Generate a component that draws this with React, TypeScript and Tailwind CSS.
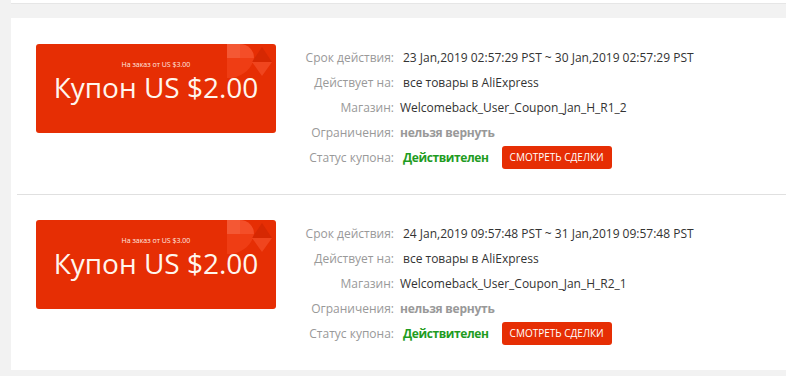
import React from "react";

type Coupon = {
  period: string;
  store: string;
};

const coupons: Coupon[] = [
  {
    period: "23 Jan,2019 02:57:29 PST ~ 30 Jan,2019 02:57:29 PST",
    store: "Welcomeback_User_Coupon_Jan_H_R1_2",
  },
  {
    period: "24 Jan,2019 09:57:48 PST ~ 31 Jan,2019 09:57:48 PST",
    store: "Welcomeback_User_Coupon_Jan_H_R2_1",
  },
];

function CouponCard() {
  return (
    <div className="relative w-[240px] h-[89px] shrink-0 rounded-[3px] bg-[#e62e04] text-white flex flex-col items-center overflow-hidden">
      <svg
        className="absolute inset-0"
        width="240"
        height="89"
        viewBox="0 0 240 89"
      >
        <rect x="191" y="0" width="13" height="14" fill="#ff7b5c" opacity="0.55" />
        <path d="M204,0 A14,14 0 0 1 218,14 L204,14 Z" fill="#ff6a47" opacity="0.55" />
        <path d="M191,14 L218,14 Q215,29 197,34 L191,34 Z" fill="#ff5a33" opacity="0.35" />
        <path d="M226,3 L216,18 L236,18 Z" fill="#c42200" opacity="0.45" />
        <path d="M216,18 L236,18 L226,32 Z" fill="#ff6a47" opacity="0.4" />
      </svg>
      <div className="relative mt-[16px] text-[7px] leading-[10px] font-['Open_Sans',sans-serif] text-[#ffe9e0]">
        На заказ от US $3.00
      </div>
      <div className="relative mt-[1px] text-[28px] leading-[32px] font-['Open_Sans',sans-serif] text-[#fff6ee]">
        Купон US $2.00
      </div>
    </div>
  );
}

function Row({ label, children }: { label: string; children: React.ReactNode }) {
  return (
    <div className="h-[25px] flex items-center">
      <div className="w-[100px] text-right text-[#999] text-[12px]">{label}</div>
      {children}
    </div>
  );
}

function CouponRow({ c, first }: { c: Coupon; first: boolean }) {
  return (
    <div className={`flex items-start pl-[19px] pb-[24px] ${first ? "pt-[26px]" : "pt-[25px]"}`}>
      <CouponCard />
      <div className="ml-[18px] mt-[1px] flex flex-col font-['Open_Sans',sans-serif] text-[12px] text-[#333]">
        <Row label="Срок действия:">
          <span className="ml-[9px] whitespace-nowrap">{c.period}</span>
        </Row>
        <Row label="Действует на:">
          <span className="ml-[9px] whitespace-nowrap">все товары в AliExpress</span>
        </Row>
        <Row label="Магазин:">
          <span className="ml-[6px] whitespace-nowrap">{c.store}</span>
        </Row>
        <Row label="Ограничения:">
          <span className="ml-[6px] whitespace-nowrap font-bold tracking-[-0.25px] text-[#999]">нельзя вернуть</span>
        </Row>
        <Row label="Статус купона:">
          <span className="ml-[9px] whitespace-nowrap font-bold tracking-[-0.4px] text-[#1f9c1f]">Действителен</span>
          <button className="ml-[13px] h-[23px] w-[110px] rounded-[3px] bg-[#e62e04] text-white text-[10px] leading-[23px] uppercase">
            Смотреть сделки
          </button>
        </Row>
      </div>
    </div>
  );
}

export default function App() {
  return (
    <div className="w-[786px] h-[376px] overflow-hidden bg-[#f2f2f2] pl-[11px] font-['Open_Sans',sans-serif]">
      <div className="h-[4px] bg-white border-b border-[#e6e6e6]" />
      <div className="mt-[14px] bg-white pl-[6px]">
        {coupons.map((c, i) => (
          <div key={i}>
            {i > 0 && <div className="h-px bg-[#e0e0e0]" />}
            <CouponRow c={c} first={i === 0} />
          </div>
        ))}
      </div>
    </div>
  );
}
